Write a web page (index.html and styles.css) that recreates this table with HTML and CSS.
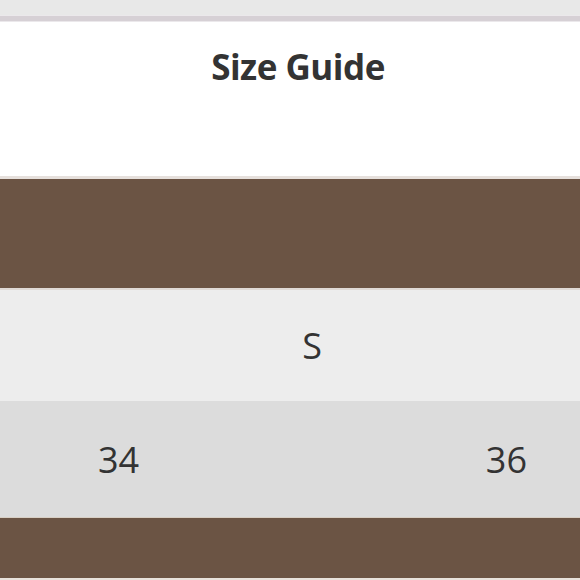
FILE: index.html
```html
<!DOCTYPE html>
<html lang="en">
<head>
<meta charset="utf-8">
<title>Size Guide</title>
<link rel="stylesheet" href="styles.css">
</head>
<body>
<div class="topbar">
  <div class="topbar-fill"></div>
  <div class="topbar-edge"></div>
</div>
<header class="head">
  <h1 class="title">Size Guide</h1>
</header>
<div class="table">
  <div class="band band-top"></div>
  <div class="row row-size"><span class="cell">S</span></div>
  <div class="row row-values"><span class="cell">34</span><span class="cell">36</span></div>
  <div class="band band-bottom"></div>
</div>
</body>
</html>
```
FILE: styles.css
```css
html, body {
  margin: 0;
  padding: 0;
  background: #ffffff;
}
body {
  font-family: "Open Sans", "Noto Sans", sans-serif;
  color: #333333;
  height: 580px;
  overflow: hidden;
}
.topbar {
  display: flex;
  flex-direction: column;
}
.topbar-fill {
  height: 15px;
  background: #e8e8e8;
  border-bottom: 1px solid #ebe8eb;
}
.topbar-edge {
  height: 5px;
  background: #d6d0d5;
  border-bottom: 1px solid #ebe8eb;
}
.head {
  height: 154px;
  padding-top: 15px;
  box-sizing: border-box;
}
.title {
  margin: 0;
  padding-left: 16px;
  text-align: center;
  font-size: 35px;
  font-weight: 700;
  letter-spacing: -0.5px;
  line-height: 60px;
}
.table {
  display: flex;
  flex-direction: column;
}
.band {
  background: #6b5444;
}
.band-top {
  height: 109px;
  border-top: 3px solid #e6e0dc;
  border-bottom: 2px solid #e0dad6;
}
.row {
  display: flex;
  align-items: center;
  font-size: 36px;
  font-weight: 400;
}
.row-size {
  height: 111px;
  background: #ededed;
  justify-content: center;
  padding-left: 44px;
}
.row-values {
  height: 116px;
  background: #dcdcdc;
  justify-content: space-between;
  padding: 0 53px 0 98px;
}
.band-bottom {
  height: 60px;
  border-top: 1px solid #d8cfc4;
  border-bottom: 2px solid #e8e2dc;
}
```
